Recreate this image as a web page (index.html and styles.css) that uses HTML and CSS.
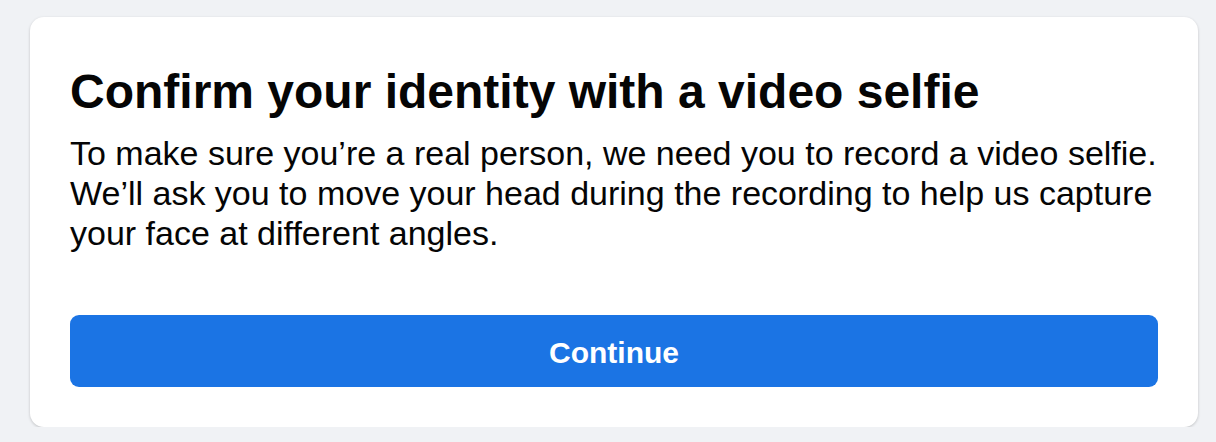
FILE: index.html
```html
<!DOCTYPE html>
<html lang="en">
<head>
    <meta charset="UTF-8">
    <meta name="viewport" content="width=device-width, initial-scale=1.0">
    <title>Video selfie</title>
    <link rel="stylesheet" href="styles.css">
</head>
<body>
    <main class="card">
        <h1 class="card-title">Confirm your identity with a video selfie</h1>
        <p class="card-text">To make sure you’re a real person, we need you to record a video selfie. We’ll ask you to move your head during the recording to help us capture your face at different angles.</p>
        <button type="button" class="btn-primary">Continue</button>
    </main>
</body>
</html>
```

FILE: styles.css
```css
body {
    margin: 0;
    padding: 17px 18px 0 30px;
    background-color: #f0f2f5;
    font-family: "Liberation Sans", Arial, sans-serif;
    color: #050505;
}
.card {
    background: #fff;
    border-radius: 14px;
    box-shadow: 0 1px 3px rgba(0, 0, 0, 0.2);
    padding: 46px 40px 40px;
}
.card-title {
    margin: 0;
    font-size: 48px;
    line-height: 58px;
    font-weight: bold;
}
.card-text {
    margin: 12px 0 0;
    font-size: 34px;
    line-height: 40px;
}
.btn-primary {
    display: block;
    width: 100%;
    height: 72px;
    margin-top: 62px;
    padding: 4px 0 0;
    background-color: #1b74e4;
    color: #fff;
    border: none;
    border-radius: 9px;
    font-family: inherit;
    font-size: 30px;
    font-weight: bold;
    cursor: pointer;
}
```
